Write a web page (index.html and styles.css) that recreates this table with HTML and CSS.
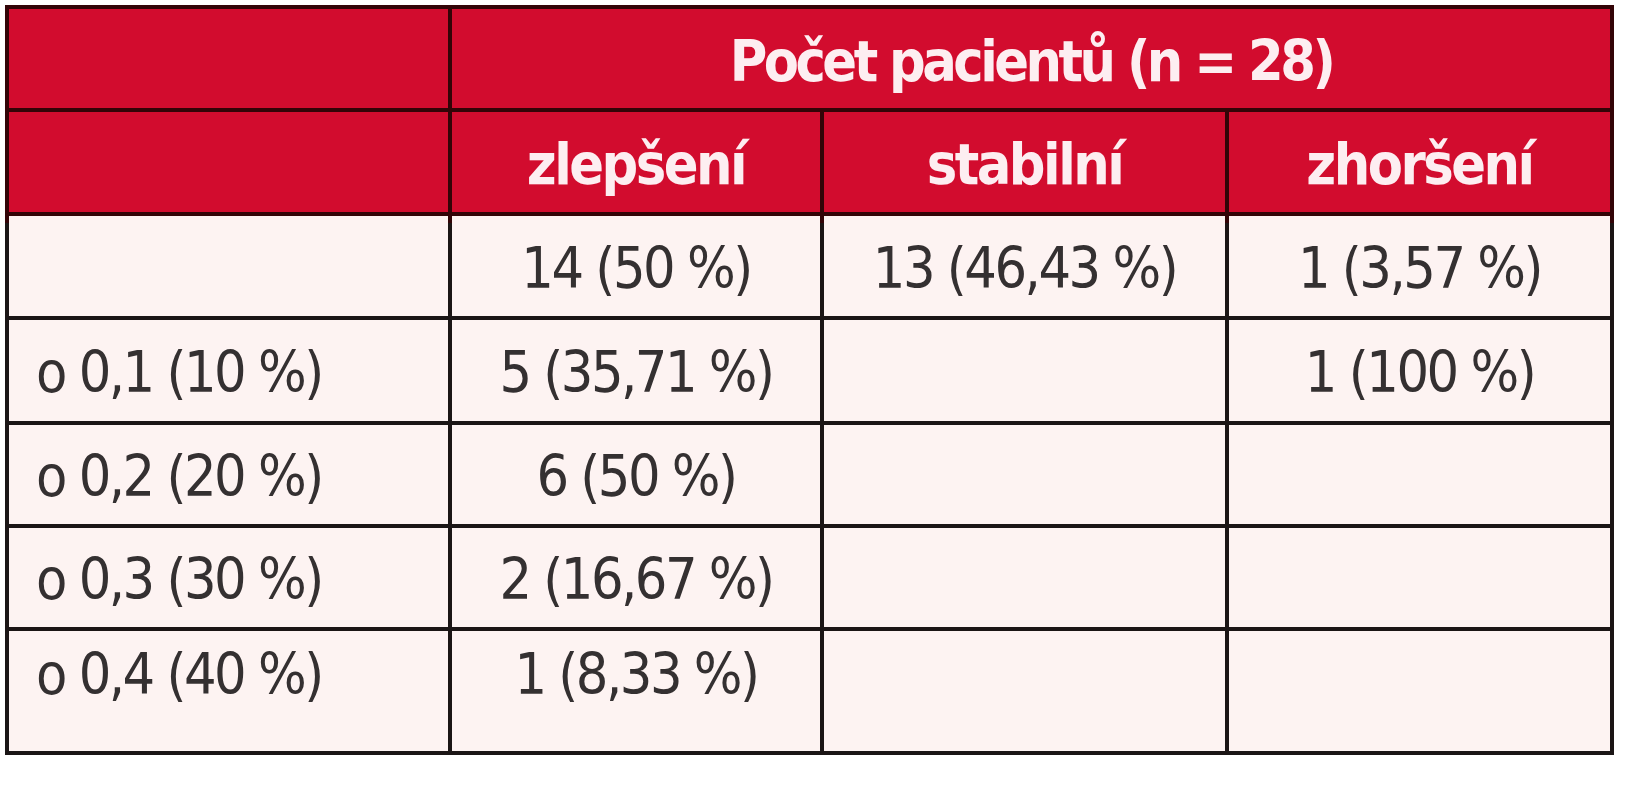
FILE: index.html
```html
<!DOCTYPE html>
<html lang="cs">
<head>
<meta charset="utf-8">
<title>Počet pacientů</title>
<link rel="stylesheet" href="styles.css">
</head>
<body>
<div class="table">
  <div class="cell head"></div>
  <div class="cell head span3">Počet pacientů (n = 28)</div>

  <div class="cell head"></div>
  <div class="cell head sub">zlepšení</div>
  <div class="cell head sub">stabilní</div>
  <div class="cell head sub">zhoršení</div>

  <div class="cell"></div>
  <div class="cell num">14 (50 %)</div>
  <div class="cell num">13 (46,43 %)</div>
  <div class="cell num">1 (3,57 %)</div>

  <div class="cell label">o 0,1 (10 %)</div>
  <div class="cell num">5 (35,71 %)</div>
  <div class="cell num"></div>
  <div class="cell num">1 (100 %)</div>

  <div class="cell label">o 0,2 (20 %)</div>
  <div class="cell num">6 (50 %)</div>
  <div class="cell num"></div>
  <div class="cell num"></div>

  <div class="cell label">o 0,3 (30 %)</div>
  <div class="cell num">2 (16,67 %)</div>
  <div class="cell num"></div>
  <div class="cell num"></div>

  <div class="cell label last">o 0,4 (40 %)</div>
  <div class="cell num last">1 (8,33 %)</div>
  <div class="cell num last"></div>
  <div class="cell num last"></div>
</div>
</body>
</html>
```

FILE: styles.css
```css
html, body {
  margin: 0;
  padding: 0;
  background: #ffffff;
}

body {
  padding: 5px 0 0 5px;
}

.table {
  display: grid;
  width: max-content;
  grid-template-columns: 439px 368px 401px 381px;
  grid-template-rows: 99px 100px 100px 101px 99px 99px 120px;
  gap: 4px;
  padding: 4px;
  background: linear-gradient(to bottom, #330407 0, #330407 218px, #1b1515 218px, #1b1515 100%);
  font-family: "DejaVu Sans Condensed", "Liberation Sans Narrow", "Liberation Sans", sans-serif;
  font-size: 57px;
  letter-spacing: -2.5px;
  line-height: 1;
}

.cell {
  background: #fdf3f2;
  color: #343031;
  display: flex;
  align-items: center;
  justify-content: center;
  padding-top: 4px;
  box-sizing: border-box;
}

.cell.head {
  background: #d20c2e;
  color: #fdeef1;
  font-weight: bold;
  padding-top: 4px;
}

.cell.span3 {
  grid-column: span 3;
  letter-spacing: -3.5px;
  padding-top: 6px;
}

.label {
  justify-content: flex-start;
  padding-left: 27px;
}

.cell.last {
  align-items: flex-start;
  padding-top: 15px;
}
```
